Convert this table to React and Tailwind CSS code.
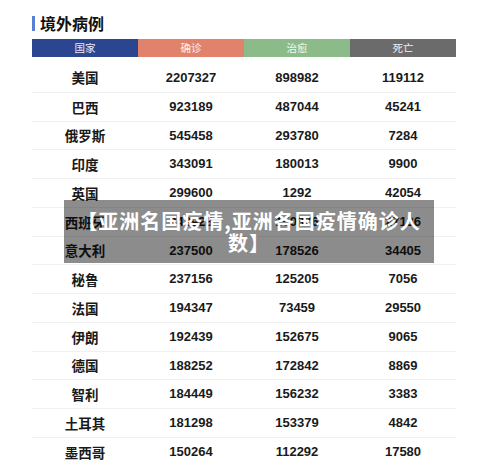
import React from 'react';

const rows = [
  ['美国', '2207327', '898982', '119112'],
  ['巴西', '923189', '487044', '45241'],
  ['俄罗斯', '545458', '293780', '7284'],
  ['印度', '343091', '180013', '9900'],
  ['英国', '299600', '1292', '42054'],
  ['西班牙', '243928', '150376', '27136'],
  ['意大利', '237500', '178526', '34405'],
  ['秘鲁', '237156', '125205', '7056'],
  ['法国', '194347', '73459', '29550'],
  ['伊朗', '192439', '152675', '9065'],
  ['德国', '188252', '172842', '8869'],
  ['智利', '184449', '156232', '3383'],
  ['土耳其', '181298', '153379', '4842'],
  ['墨西哥', '150264', '112292', '17580'],
];

const cjk = { fontFamily: '"Noto Sans CJK SC", "Noto Sans", sans-serif' };
const num = { fontFamily: '"Liberation Sans", "Noto Sans CJK SC", sans-serif' };

export default function App() {
  return (
    <div className="relative w-[500px] h-[464px] overflow-hidden bg-white" style={cjk}>
      {/* Title */}
      <div className="flex items-center ml-[32px] mt-[13px] h-[20px]">
        <div className="w-[3px] h-[15px] bg-[#5b7fd1]"></div>
        <h1 className="ml-[5px] text-[16px] font-bold text-[#111] leading-[20px]">境外病例</h1>
      </div>

      {/* Table */}
      <div className="ml-[32px] mt-[6px] w-[424px]">
        <div className="grid grid-cols-4 h-[18px] text-[10.5px] text-white/90 leading-[18px] text-center">
          <div className="bg-[#2b4590]">国家</div>
          <div className="bg-[#e0826c]">确诊</div>
          <div className="bg-[#8cbb8a]">治愈</div>
          <div className="bg-[#6b6b6b]">死亡</div>
        </div>
        <div className="mt-[6px]">
          {rows.map((r, i) => (
            <div
              key={i}
              className={`grid grid-cols-4 h-[28.75px] items-center text-center text-[#1a1a1a] ${i > 0 ? 'border-t border-[#f1f1f1]' : ''}`}
            >
              <div className="text-[13.5px] font-bold">{r[0]}</div>
              <div className="text-[13px] font-bold" style={num}>{r[1]}</div>
              <div className="text-[13px] font-bold" style={num}>{r[2]}</div>
              <div className="text-[13px] font-bold" style={num}>{r[3]}</div>
            </div>
          ))}
        </div>
      </div>

      {/* Overlay caption */}
      <div className="absolute left-[64px] top-[200px] w-[370px] h-[63px] bg-black/45 px-[8px] py-[9px] flex items-center justify-center">
        <p className="text-white font-bold text-[20px] leading-[22px] tracking-[1px] text-center">
          【亚洲名国疫情,亚洲各国疫情确诊人数】
        </p>
      </div>
    </div>
  );
}
